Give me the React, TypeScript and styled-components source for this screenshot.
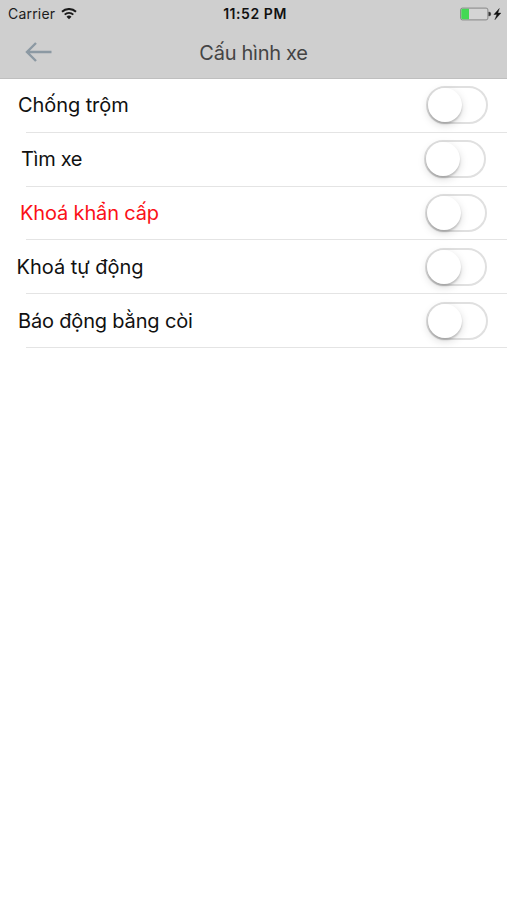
import React, { useState } from "react";
import styled, { createGlobalStyle } from "styled-components";

const GlobalStyle = createGlobalStyle`
  * { box-sizing: border-box; }
  body { margin: 0; background: #fff; font-family: Inter, "Liberation Sans", sans-serif; }
`;

const Screen = styled.main`
  width: 507px;
  height: 900px;
  overflow: hidden;
  background: #fff;
`;

const Header = styled.header`
  height: 79px;
  background: #cfcfcf;
  border-bottom: 1px solid #bfbfbf;
`;

const StatusBar = styled.div`
  display: grid;
  grid-template-columns: 1fr auto 1fr;
  align-items: center;
  height: 27px;
  padding: 0 5px 0 8px;
`;

const Carrier = styled.div`
  display: flex;
  align-items: center;
  gap: 6px;
  font-size: 14px;
  line-height: 27px;
  letter-spacing: 0.2px;
  color: #1c1c1c;
`;

const Clock = styled.div`
  padding-top: 1px;
  font-size: 14px;
  line-height: 26px;
  font-weight: 600;
  letter-spacing: 0.55px;
  color: #111;
`;

const Power = styled.div`
  display: flex;
  align-items: center;
  justify-content: flex-end;
`;

const NavBar = styled.nav`
  display: grid;
  grid-template-columns: 1fr auto 1fr;
  align-items: center;
  height: 50px;
`;

const BackButton = styled.button`
  display: flex;
  width: 28px;
  margin-left: 25px;
  padding: 0;
  border: 0;
  background: none;
`;

const Title = styled.h1`
  margin: 0;
  padding-top: 2px;
  font-size: 20px;
  line-height: 48px;
  font-weight: 400;
  letter-spacing: -0.28px;
  color: #444;
`;

const List = styled.div`
  display: grid;
  grid-auto-rows: 53.8px;
`;

const Row = styled.div<{ $start: number; $end: number }>`
  display: flex;
  align-items: center;
  justify-content: space-between;
  padding: 0 ${(p) => p.$end}px 1px ${(p) => p.$start}px;
  background: linear-gradient(#e4e4e4, #e4e4e4) 26px 100% / 100% 1px no-repeat;
`;

const Label = styled.span<{ $danger?: boolean; $tracking: number }>`
  font-size: 20px;
  line-height: 30px;
  letter-spacing: ${(p) => p.$tracking}px;
  white-space: nowrap;
  color: ${(p) => (p.$danger ? "#fb1018" : "#111")};
`;

const Switch = styled.button<{ $on: boolean }>`
  display: flex;
  justify-content: ${(p) => (p.$on ? "flex-end" : "flex-start")};
  width: 62px;
  height: 38px;
  padding: 0;
  border: 2px solid ${(p) => (p.$on ? "#4cd964" : "#e0e0e0")};
  border-radius: 19px;
  background: ${(p) => (p.$on ? "#4cd964" : "#fff")};
`;

const Knob = styled.span`
  width: 34px;
  height: 34px;
  border-radius: 50%;
  background: #fff;
  box-shadow: 0 2px 2px rgba(0, 0, 0, 0.18), 0 3px 8px rgba(0, 0, 0, 0.15);
`;

const settings = [
  { label: "Chống trộm", start: 18, end: 19, tracking: -0.08 },
  { label: "Tìm xe", start: 21, end: 21, tracking: -0.3 },
  { label: "Khoá khẩn cấp", start: 20, end: 20, tracking: -0.15, danger: true },
  { label: "Khoá tự động", start: 16.5, end: 20, tracking: -0.02 },
  { label: "Báo động bằng còi", start: 18, end: 19, tracking: -0.17 },
];

function WifiIcon() {
  return (
    <svg width="16" height="12" viewBox="0 0 16 12" fill="none" stroke="#1a1a1a" strokeWidth="1.9">
      <path d="M1 3.8a10 10 0 0 1 14 0" />
      <path d="M3.7 6.6a6.1 6.1 0 0 1 8.6 0" />
      <path d="M8 11.2 5.5 8.7a3.6 3.6 0 0 1 5 0Z" fill="#1a1a1a" stroke="none" />
    </svg>
  );
}

function BatteryIcon() {
  return (
    <svg width="42" height="14" viewBox="0 0 42 14">
      <rect x="0.6" y="1.1" width="27.3" height="11.8" rx="1.8" fill="#d4d4d4" stroke="#858585" />
      <path d="M2.5 1.8H9v10.4H2.5a1.2 1.2 0 0 1-1.2-1.2V3a1.2 1.2 0 0 1 1.2-1.2Z" fill="#43d854" />
      <path d="M28.8 5a2 2 0 0 1 0 4Z" fill="#333" stroke="#333" strokeWidth=".5" />
      <path d="M39.3 1.5 33.9 7.5h3l-2 5.2 6-6.6h-3.1Z" fill="#111" stroke="#111" strokeWidth=".4" />
    </svg>
  );
}

function BackIcon() {
  return (
    <svg width="28" height="22" viewBox="0 0 28 22" fill="none" stroke="#8c99a3" strokeWidth="2.4">
      <path d="M11 2 2 11l9 9M2.3 11H26.5" />
    </svg>
  );
}

function SettingRow({ item }: { item: (typeof settings)[number] }) {
  const [on, setOn] = useState(false);
  return (
    <Row $start={item.start} $end={item.end}>
      <Label $danger={item.danger} $tracking={item.tracking}>{item.label}</Label>
      <Switch $on={on} role="switch" aria-checked={on} aria-label={item.label} onClick={() => setOn(!on)}>
        <Knob />
      </Switch>
    </Row>
  );
}

export default function App() {
  return (
    <Screen>
      <GlobalStyle />
      <Header>
        <StatusBar>
          <Carrier>Carrier <WifiIcon /></Carrier>
          <Clock>11:52 PM</Clock>
          <Power><BatteryIcon /></Power>
        </StatusBar>
        <NavBar>
          <BackButton aria-label="Quay lại"><BackIcon /></BackButton>
          <Title>Cấu hình xe</Title>
        </NavBar>
      </Header>
      <List>
        {settings.map((item) => <SettingRow key={item.label} item={item} />)}
      </List>
    </Screen>
  );
}
